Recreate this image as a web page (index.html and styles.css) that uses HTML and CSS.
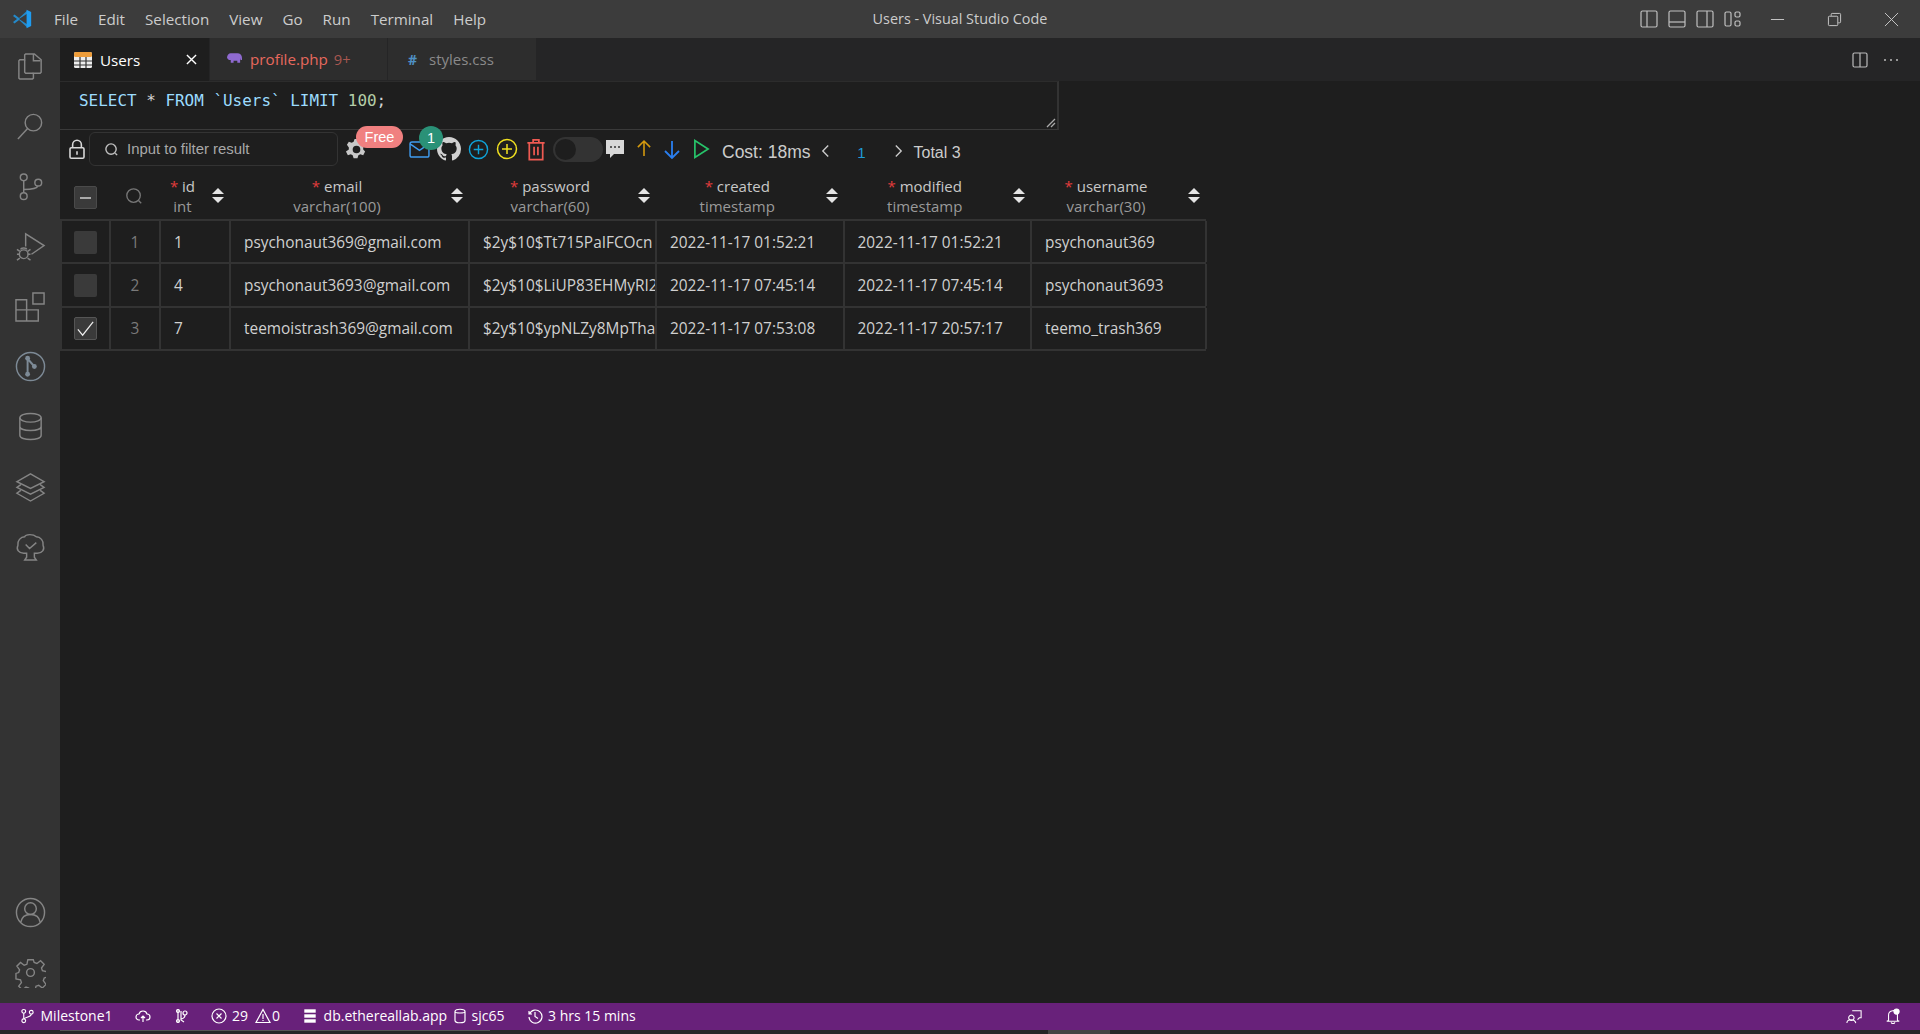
FILE: index.html
```html
<!DOCTYPE html>
<html lang="en">
<head>
<meta charset="utf-8">
<title>Users - Visual Studio Code</title>
<link rel="stylesheet" href="styles.css">
</head>
<body>
<div class="app">
  <header class="titlebar">
    <svg class="logo" viewBox="0 0 24 24"><path fill="#2489ca" d="M1.200 8.300 3 6.600l5.500 4.200L18 2l.1 3.700L8.400 12l9.700 6.300-.1 3.700-9.500-8.800L3 17.400l-1.800-1.700L6 12z"/><path fill="#1f9cf0" d="M17.500 1 23 3.700v16.600L17.500 23z"/></svg>
    <nav class="menu"><span>File</span><span>Edit</span><span>Selection</span><span>View</span><span>Go</span><span>Run</span><span>Terminal</span><span>Help</span></nav>
    <div class="wintitle">Users - Visual Studio Code</div>
    <div class="layout-icons">
      <svg viewBox="0 0 18 18"><rect x="1" y="1" width="16" height="16" rx="1.500"/><path d="M7 1v16"/></svg>
      <svg viewBox="0 0 18 18"><rect x="1" y="1" width="16" height="16" rx="1.500"/><path d="M1 12h16"/></svg>
      <svg viewBox="0 0 18 18"><rect x="1" y="1" width="16" height="16" rx="1.500"/><path d="M11 1v16"/></svg>
      <svg viewBox="0 0 18 18"><rect x="1" y="2" width="6" height="14" rx="1.500"/><rect x="11" y="2" width="5" height="5" rx="1.500"/><rect x="11" y="11" width="5" height="5" rx="1.500"/></svg>
    </div>
    <div class="winctl">
      <svg viewBox="0 0 16 16"><path d="M1 8h14"/></svg>
      <svg viewBox="0 0 16 16"><rect x="1.500" y="4.500" width="10" height="10" rx="1"/><path d="M4.500 4V2.500a1 1 0 0 1 1-1h8a1 1 0 0 1 1 1v8a1 1 0 0 1-1 1H12"/></svg>
      <svg viewBox="0 0 16 16"><path d="m1 1 14 14M15 1 1 15"/></svg>
    </div>
  </header>
  <div class="body">
    <aside class="activity">
      <svg viewBox="0 0 32 32"><path d="M19 3h-8l-1 1v5H5L4 10v18l1 1h13l1-1v-5h7l1-1V9l-7-6zM19 3v7h7"/><path d="M10 9v13l1 1h8"/></svg>
      <svg viewBox="0 0 32 32"><circle cx="19" cy="12" r="8.500"/><path d="M13 18 3 29"/></svg>
      <svg viewBox="0 0 32 32"><circle cx="9" cy="6.500" r="3.500"/><circle cx="9" cy="26" r="3.500"/><circle cx="24" cy="12" r="3.500"/><path d="M9 10v12.500M9 19c8 0 14-1 14.500-3.500"/></svg>
      <svg viewBox="0 0 32 32"><path d="M11 16V3l19 12-13 9"/><circle cx="9" cy="24" r="4.500"/><path d="M2 19l3 2M2 24h3M2 30l3-2M16 19l-3 2M16 24h-3M16 30l-3-2M6 19c0-2 6-2 6 0"/></svg>
      <svg viewBox="0 0 32 32"><path d="M1 9h11v10.500h12V31H1zM1 19.500h11V31M18.500 2H30v11.500H18.500z"/></svg>
      <svg class="git" viewBox="0 0 32 32"><circle cx="16" cy="16" r="14.500"/><path class="thick" d="M13 7v17M13 8l7 8"/><circle class="solid" cx="13" cy="7.500" r="2.500"/><circle class="solid" cx="13" cy="24" r="2.500"/><circle class="solid" cx="20" cy="16" r="2.500"/></svg>
      <svg viewBox="0 0 32 32"><ellipse cx="16" cy="7" rx="11" ry="4.500"/><path d="M5 7v18c0 6 22 6 22 0V7M5 16c0 5.500 22 5.500 22 0"/></svg>
      <svg viewBox="0 0 32 32"><path d="m16 3 14 8-14 7-14-7zM6 14l-4 3 14 7 14-7-4-3M6 20l-4 3 14 8 14-8-4-3"/></svg>
      <svg viewBox="0 0 32 32"><path d="M12 23H9C4 23 1 19 3 15 2 10 6 6 10 6c1-3 9-3 12 0 4 0 8 4 7 9 2 4-1 8-6 8h-3v4l2 3H10l2-3zM11 14l4 4 7-6"/></svg>
      <div class="spacer"></div>
      <svg viewBox="0 0 32 32"><circle cx="16" cy="16" r="14.500"/><circle cx="16" cy="12" r="6"/><path d="M6 26c1-6 5-8 10-8s9 2 10 8"/></svg>
      <svg viewBox="0 0 32 32"><path d="m13 2-1 5-3 1-4-3-4 4 3 4-1 3-3 1v6l5 1 1 3-3 4 4 4 4-3 3 1 1 3h6l1-5 3-1 4 3 4-4-3-4 1-3 3-1v-6l-5-1-1-3 3-4-4-4-4 3-3-1-1-3z" transform="translate(1 1) scale(.94)"/><circle cx="16" cy="16" r="4"/></svg>
    </aside>
    <main class="editor">
      <div class="tabs">
        <div class="tab active">
          <svg class="tabicon" viewBox="0 0 18 18"><rect y="1" width="18" height="16" rx="1.500" fill="#eee"/><rect y="1" width="18" height="5" rx="1.500" fill="#ee9d3a"/><path d="M0 10h18M0 14h18M6 6v11M12 6v11" stroke="#333" stroke-width="1.200"/></svg>
          <span class="tabname">Users</span>
          <svg class="tabclose" viewBox="0 0 12 12"><path d="m1 1 10 10M11 1 1 11"/></svg>
        </div>
        <div class="tab php">
          <svg class="tabicon" viewBox="0 0 16 12"><path fill="#8f6ad0" d="M4 1h7c3 0 5 2 5 5v2h-1.500l-.5-2v5h-3V9H7v2H4V8H2L0 6c0-3 2-5 4-5z"/></svg>
          <span class="tabname err">profile.php</span><span class="count">9+</span>
        </div>
        <div class="tab css">
          <span class="hash">#</span><span class="tabname dim">styles.css</span>
        </div>
        <div class="tabs-right">
          <svg viewBox="0 0 16 16"><rect x="1" y="1" width="14" height="14" rx="1.500"/><path d="M8 1v14"/></svg>
          <svg viewBox="0 0 16 16"><circle class="dot" cx="2" cy="8" r="1"/><circle class="dot" cx="8" cy="8" r="1"/><circle class="dot" cx="14" cy="8" r="1"/></svg>
        </div>
      </div>
      <div class="sqlbox">
        <code class="sql"><span class="kw">SELECT</span> <span class="star">*</span> <span class="kw">FROM</span> <span class="str">`Users`</span> <span class="kw">LIMIT</span> <span class="num">100</span><span class="star">;</span></code>
        <svg class="grip" viewBox="0 0 10 10"><path d="M9 1 1 9M9 5 5 9"/></svg>
      </div>
      <div class="toolbar">
        <svg class="lock" viewBox="0 0 20 24"><rect x="2" y="10" width="16" height="12" rx="1.500"/><path d="M5 10V6.500a5 5 0 0 1 10 0V10M10 14v4"/></svg>
        <div class="filter">
          <svg viewBox="0 0 16 16"><circle cx="7.500" cy="7.500" r="5.500"/><path d="m12 12 2 2"/></svg>
          <span>Input to filter result</span>
        </div>
        <div class="gear-wrap">
          <svg class="gear" viewBox="0 0 24 24"><path fill="#c8c8c8" d="m10 1-1 3-2 1-3-1-2 3 2 3v2l-3 2 2 4 3-1 2 1 1 3h4l1-3 2-1 3 1 2-4-2-2v-2l2-3-2-3-3 1-2-1-1-3zm2 7a4 4 0 1 1 0 8 4 4 0 0 1 0-8z"/></svg>
          <span class="free">Free</span>
        </div>
        <div class="mail-wrap">
          <svg class="mail" viewBox="0 0 22 18"><rect x="1" y="1" width="20" height="16" rx="2"/><path d="m1 3 10 7 10-7"/></svg>
          <span class="badge">1</span>
        </div>
        <svg class="github" viewBox="0 0 16 16"><path fill="#d0d0d0" d="M8 0C3.580 0 0 3.580 0 8c0 3.540 2.290 6.530 5.470 7.590.4.070.55-.17.55-.38 0-.19-.01-.82-.01-1.490-2.010.37-2.530-.49-2.690-.94-.09-.23-.48-.94-.82-1.130-.28-.15-.68-.52-.01-.53.63-.01 1.080.58 1.230.82.720 1.210 1.870.870 2.330.660.070-.520.280-.870.510-1.070-1.780-.2-3.640-.890-3.640-3.950 0-.870.310-1.590.820-2.150-.080-.2-.360-1.020.080-2.120 0 0 .670-.210 2.200.820a7.420 7.420 0 0 1 4 0c1.530-1.040 2.200-.820 2.200-.820.440 1.100.160 1.920.080 2.120.510.560.820 1.270.820 2.150 0 3.070-1.870 3.750-3.650 3.950.290.250.540.730.540 1.480 0 1.070-.010 1.930-.010 2.200 0 .210.150.460.550.380A8.010 8.010 0 0 0 16 8c0-4.420-3.580-8-8-8z"/></svg>
        <svg class="round blue" viewBox="0 0 22 22"><circle cx="11" cy="11" r="9.500"/><path d="M11 6v10M6 11h10"/></svg>
        <svg class="round yellow" viewBox="0 0 22 22"><circle cx="11" cy="11" r="9.500"/><path d="M11 6v10M6 11h10"/></svg>
        <svg class="trash" viewBox="0 0 20 24"><path d="M1 5h18M7 5V2h6v3M3 5v17.500h14V5M8 9v9M12 9v9"/></svg>
        <span class="toggle"><i></i></span>
        <svg class="chat" viewBox="0 0 20 20"><path fill="#d8d8d8" d="M1 1h18v14H9l-4 4v-4H1z"/><circle cx="6" cy="8" r="1" fill="#333"/><circle cx="10" cy="8" r="1" fill="#333"/><circle cx="14" cy="8" r="1" fill="#333"/></svg>
        <svg class="arrow up" viewBox="0 0 16 20"><path d="M8 19V2M1 9l7-7 7 7"/></svg>
        <svg class="arrow down" viewBox="0 0 16 20"><path d="M8 1v17M1 11l7 7 7-7"/></svg>
        <svg class="play" viewBox="0 0 18 22"><path d="M2 2v18l14-9z"/></svg>
        <span class="cost">Cost: 18ms</span>
        <svg class="chev first" viewBox="0 0 10 14"><path d="M8 1 2 7l6 6"/></svg>
        <span class="page">1</span>
        <svg class="chev" viewBox="0 0 10 14"><path d="m2 1 6 6-6 6"/></svg>
        <span class="total">Total 3</span>
      </div>
      <div class="grid">
        <div class="head">
          <div class="hc c-check"><span class="checkbox minus"></span></div>
          <div class="hc c-num"><svg class="hsearch" viewBox="0 0 20 20"><circle cx="9.500" cy="9.500" r="7.500"/><path d="m15 15 3 3"/></svg></div>
          <div class="hc c-id"><div class="hname"><p><b>*</b> id</p><p class="type">int</p></div><span class="sort"></span></div>
          <div class="hc c-email"><div class="hname"><p><b>*</b> email</p><p class="type">varchar(100)</p></div><span class="sort"></span></div>
          <div class="hc c-pw"><div class="hname"><p><b>*</b> password</p><p class="type">varchar(60)</p></div><span class="sort"></span></div>
          <div class="hc c-ts"><div class="hname"><p><b>*</b> created</p><p class="type">timestamp</p></div><span class="sort"></span></div>
          <div class="hc c-ts"><div class="hname"><p><b>*</b> modified</p><p class="type">timestamp</p></div><span class="sort"></span></div>
          <div class="hc c-user"><div class="hname"><p><b>*</b> username</p><p class="type">varchar(30)</p></div><span class="sort"></span></div>
        </div>
        <div class="row">
          <div class="c c-check"><span class="checkbox"></span></div><div class="c c-num">1</div><div class="c c-id">1</div><div class="c c-email">psychonaut369@gmail.com</div><div class="c c-pw">$2y$10$Tt715PaIFCOcn</div><div class="c c-ts">2022-11-17 01:52:21</div><div class="c c-ts">2022-11-17 01:52:21</div><div class="c c-user">psychonaut369</div>
        </div>
        <div class="row">
          <div class="c c-check"><span class="checkbox"></span></div><div class="c c-num">2</div><div class="c c-id">4</div><div class="c c-email">psychonaut3693@gmail.com</div><div class="c c-pw">$2y$10$LiUP83EHMyRI2</div><div class="c c-ts">2022-11-17 07:45:14</div><div class="c c-ts">2022-11-17 07:45:14</div><div class="c c-user">psychonaut3693</div>
        </div>
        <div class="row">
          <div class="c c-check"><span class="checkbox checked"><svg viewBox="0 0 22 22"><path d="m3 12 5 6L19 4"/></svg></span></div><div class="c c-num">3</div><div class="c c-id">7</div><div class="c c-email">teemoistrash369@gmail.com</div><div class="c c-pw">$2y$10$ypNLZy8MpTha</div><div class="c c-ts">2022-11-17 07:53:08</div><div class="c c-ts">2022-11-17 20:57:17</div><div class="c c-user">teemo_trash369</div>
        </div>
      </div>
    </main>
  </div>
  <footer class="status">
    <span class="si branch"><svg viewBox="0 0 16 16"><circle cx="4" cy="3" r="2"/><circle cx="4" cy="13" r="2"/><circle cx="12" cy="4" r="2"/><path d="M4 5v6M12 6c0 3-6 3-8 5"/></svg>Milestone1</span>
    <span class="si"><svg viewBox="0 0 16 16"><path d="M5 12H4a3 3 0 0 1 0-6c1-4 7-4 8 0a3 3 0 0 1 0 6h-1M8 14V8M6 10l2-2 2 2"/></svg></span>
    <span class="si"><svg viewBox="0 0 16 16"><circle cx="5" cy="3" r="1.500"/><circle cx="5" cy="13" r="1.500"/><circle cx="12" cy="5" r="2"/><path d="M5 1v14M8 3v9l3 2M12 7c0 3-3 4-4 4"/></svg></span>
    <span class="si"><svg viewBox="0 0 16 16"><circle cx="8" cy="8" r="7"/><path d="m5.500 5.500 5 5M10.500 5.500l-5 5"/></svg>29<svg class="tight" viewBox="0 0 16 16"><path d="M8 1.500 15 14.500H1zM8 6v5M8 12v1"/></svg>0</span>
    <span class="si db"><svg viewBox="0 0 16 16"><path class="fillw" d="M2 1h12v4H2zM2 6h12v4H2zM2 11h12v4H2z"/></svg>db.ethereallab.app</span>
    <span class="si"><svg class="cyl" viewBox="0 0 12 16"><path d="M1 3.500c0-3 10-3 10 0v9c0 3-10 3-10 0zM1 3.500c0 2 10 2 10 0"/></svg>sjc65</span>
    <span class="si"><svg viewBox="0 0 16 16"><path d="M2 3v3h3M2.500 6a6.500 6.500 0 1 1-.5 3M8 4v4.500l3 2"/></svg>3 hrs 15 mins</span>
    <span class="status-right">
      <svg viewBox="0 0 18 18"><path d="M7 3h10v8h-2l-2 2M6 8a3 3 0 1 0 .1 0zM1 17c0-5 9-5 10 0"/></svg>
      <svg viewBox="0 0 18 18"><path d="M4 14V8c0-6 9-7 10-1v7l2 1H2zM7 16c0 2 4 2 4 0"/><circle class="fillw" cx="13" cy="4" r="3.500"/></svg>
    </span>
  </footer>
  <div class="scrollstrip"><i class="strip-a"></i><i class="strip-b"></i></div>
</div>
</body>
</html>
```
FILE: styles.css
```css
* { box-sizing: border-box; }
html, body { margin: 0; height: 100%; background: #1e1e1e; overflow: hidden; }
body { font-family: "Open Sans", "Noto Sans", sans-serif; font-size: 14px; color: #ccc; }
p { margin: 0; }
svg { display: block; flex: none; fill: none; stroke: currentColor; stroke-width: 1.500; }
.app { width: 1920px; height: 1034px; display: flex; flex-direction: column; }

.titlebar { height: 38px; flex: none; background: #3c3c3c; display: flex; align-items: center; position: relative; }
.logo { width: 20px; height: 20px; margin-left: 12px; stroke: none; }
.menu { display: flex; margin-left: 12px; font-size: 15.200px; color: #ccc; }
.menu span { padding: 0 10px; }
.wintitle { position: absolute; left: 0; right: 0; top: 0; line-height: 37px; text-align: center; font-size: 14.400px; color: #ccc; }
.layout-icons { margin-left: auto; display: flex; gap: 10px; color: #c0c0c0; position: relative; }
.layout-icons svg { width: 18px; height: 18px; stroke-width: 1.200; }
.winctl { display: flex; align-items: center; gap: 42px; margin-left: 28px; margin-right: 21px; color: #ccc; }
.winctl svg { width: 15px; height: 15px; stroke-width: 1; }

.body { flex: 1; min-height: 0; display: flex; }
.activity { width: 60px; flex: none; background: #333; display: flex; flex-direction: column; align-items: center; padding: 13px 0 15px; color: #858585; gap: 29px; }
.activity svg { width: 31px; height: 31px; stroke-width: 1.500; }
.activity .git { color: #7d8a96; }
.activity .git .thick { stroke-width: 2; }
.activity .solid { fill: currentColor; stroke: none; }
.spacer { flex: 1; }

.editor { flex: 1; min-width: 0; background: #1e1e1e; display: flex; flex-direction: column; }
.tabs { height: 43px; flex: none; background: #252526; display: flex; align-items: stretch; }
.tab { display: flex; align-items: center; border-right: 1px solid #252526; background: #2d2d2d; border-bottom: 1px solid #252526; }
.tab.active { width: 150px; background: #1e1e1e; padding-left: 13px; border-bottom: 0; }
.tab.php { width: 178px; padding-left: 17px; }
.tab.css { width: 149px; padding-left: 20px; }
.tabicon { width: 20px; height: 18px; stroke: none; }
.php .tabicon { width: 15px; height: 12px; margin-top: -3px; }
.tabname { margin-left: 7px; font-size: 15.200px; color: #fff; }
.tabname.err { margin-left: 8px; color: #e8695e; }
.tabname.dim { margin-left: 11px; font-size: 15px; color: #8a8a8a; }
.count { margin-left: 6px; font-size: 14.700px; color: #a85750; }
.hash { width: 10px; color: #4f90c4; font-weight: 700; font-size: 14px; }
.tabclose { width: 11px; height: 11px; margin-left: auto; margin-right: 12px; color: #fff; }
.tabs-right { margin-left: auto; display: flex; align-items: center; gap: 15px; padding-right: 21px; color: #bbb; }
.tabs-right svg { width: 16px; height: 16px; stroke-width: 1.200; }
.tabs-right .dot { fill: #bbb; stroke: none; }

.sqlbox { width: 999px; height: 49px; flex: none; border-top: 1px solid #2c2c2c; border-bottom: 1px solid #3a3a3a; border-right: 2px solid #333; padding: 9px 0 0 19px; position: relative; background: #1e1e1e; }
.sql { font-family: "DejaVu Sans Mono", monospace; font-size: 15.950px; line-height: 20px; color: #d4d4d4; white-space: pre; }
.kw, .str { color: #9cdcfe; }
.num { color: #b5cea8; }
.star { color: #d4d4d4; }
.grip { position: absolute; right: 1px; bottom: 1px; width: 10px; height: 10px; color: #aaa; stroke-width: 1.300; }

.toolbar { height: 40px; flex: none; display: flex; align-items: center; padding: 0 0 2px 8px; }
.lock { width: 18px; height: 21px; color: #d8d8d8; stroke-width: 1.800; }
.filter { width: 249px; height: 34px; margin-left: 3px; border: 1px solid #333; border-radius: 6px; background: #1e1e1e; display: flex; align-items: center; gap: 8px; padding-left: 14px; color: #a8a8a8; font-family: "Liberation Sans", sans-serif; font-size: 14.900px; flex: none; }
.filter svg { width: 15px; height: 15px; color: #c0c0c0; }
.gear-wrap { width: 22px; height: 22px; margin-left: 7px; margin-right: 42px; position: relative; flex: none; }
.gear { width: 23px; height: 23px; stroke: none; }
.free { position: absolute; left: 11px; top: -12px; width: 47px; height: 22px; border-radius: 11px; background: #f08080; color: #fff; font-family: "Liberation Sans", sans-serif; font-size: 14.500px; line-height: 22px; text-align: center; }
.mail-wrap { width: 21px; height: 17px; position: relative; flex: none; }
.mail { width: 21px; height: 17px; color: #3f9cf0; }
.badge { position: absolute; left: 10px; top: -15px; width: 24px; height: 24px; border-radius: 50%; background: #2a9177; color: #fff; font-family: "Liberation Sans", sans-serif; font-size: 14.500px; line-height: 24px; text-align: center; }
.github { width: 24px; height: 24px; margin-left: 7px; stroke: none; }
.round { width: 21px; height: 21px; }
.round.blue { color: #0fa3d9; margin-left: 7px; }
.round.yellow { color: #f0e020; margin-left: 7px; width: 22px; height: 22px; }
.trash { width: 20px; height: 23px; color: #ee5a52; margin-left: 8px; stroke-width: 1.800; }
.toggle { width: 50px; height: 25px; border-radius: 13px; background: #333; margin-left: 7px; padding: 2px; display: block; flex: none; }
.toggle i { display: block; width: 21px; height: 21px; border-radius: 50%; background: #1e1e1e; }
.chat { width: 20px; height: 20px; margin-left: 2px; stroke: none; }
.arrow { height: 20px; stroke-width: 1.800; }
.arrow.up { width: 14px; color: #d59a0e; margin-left: 12px; margin-top: -3px; }
.arrow.down { width: 16px; color: #2a7ff0; margin-left: 13px; margin-top: 1px; }
.play { width: 17px; height: 22px; color: #27c46a; stroke-width: 1.800; margin-left: 13px; }
.cost { font-family: "Liberation Sans", sans-serif; font-size: 17.500px; color: #ccc; margin-left: 12px; margin-top: 7px; }
.chev { width: 9px; height: 14px; color: #ccc; stroke-width: 1.500; margin-top: 4px; }
.chev.first { margin-left: 10px; }
.page { color: #1f9cd8; font-family: "Liberation Sans", sans-serif; font-size: 15px; width: 64px; text-align: center; margin-top: 7px; }
.total { font-family: "Liberation Sans", sans-serif; font-size: 16px; color: #ccc; margin-left: 11px; margin-top: 7px; }

.grid { width: 1146px; }
.head { display: flex; height: 51px; border-bottom: 2px solid #333; font-size: 15px; }
.row { display: flex; height: 43.330px; border-bottom: 2px solid #333; font-size: 15.400px; }
.hc { display: flex; align-items: center; flex: none; padding-top: 2px; }
.c { display: flex; align-items: center; flex: none; padding: 1px 0 0 13px; border-right: 2px solid #333; color: #d0d0d0; overflow: hidden; white-space: nowrap; }
.c:first-child { border-left: 2px solid #333; }
.c-check { width: 51px; }
.c-num { width: 50px; }
.c-id { width: 70px; }
.c-email { width: 239px; }
.c-pw { width: 187px; }
.c-ts { width: 187.500px; }
.c-user { width: 175px; }
.hc.c-check, .c.c-check { justify-content: center; padding: 1px 0 0; }
.hc.c-check { padding-top: 5px; }
.hc.c-num { justify-content: center; padding: 2px 4px 0 0; }
.c.c-num { justify-content: center; padding: 1px 0 0; color: #7a7a7a; }
.hsearch { width: 18px; height: 18px; color: #777; }
.hname { flex: 1; text-align: center; line-height: 20px; color: #c8c8c8; padding-right: 8px; }
.hname b { color: #e03c3c; font-weight: 400; }
.type { color: #9a9a9a; }
.sort { width: 13px; height: 15px; margin: 0 6px 0 0; flex: none; position: relative; }
.sort::before, .sort::after { content: ""; position: absolute; left: 0; border-left: 6.500px solid transparent; border-right: 6.500px solid transparent; }
.sort::before { top: 0; border-bottom: 6.500px solid #e4e4e4; }
.sort::after { bottom: 0; border-top: 6.500px solid #e4e4e4; }
.checkbox { display: block; width: 23px; height: 23px; border-radius: 2px; background: #3a3a3a; position: relative; }
.checkbox.minus { border: 1px solid #4a4a4a; }
.checkbox.minus::after { content: ""; position: absolute; left: 5px; right: 5px; top: 10px; height: 2px; background: #aaa; }
.checkbox.checked { border: 1px solid #555; }
.checkbox.checked svg { width: 21px; height: 21px; color: #eee; stroke-width: 1.300; }

.status { height: 27px; flex: none; background: #68217a; color: #fff; display: flex; align-items: center; font-size: 14px; padding: 0 0 2px 20px; }
.si { display: flex; align-items: center; gap: 5.500px; margin-right: 22px; }
.si svg { width: 16px; height: 16px; stroke-width: 1.200; }
.si .tight { margin: 0 -4px 0 1px; }
.si.branch svg { width: 15px; }
.si.db { margin-right: 7px; }
.si .cyl { width: 12px; }
.fillw { fill: #fff; stroke: #68217a; stroke-width: .6; }
.status-right { margin-left: auto; display: flex; gap: 23px; padding-right: 19px; }
.status-right svg { width: 16px; height: 16px; stroke-width: 1.200; }
.status-right .fillw { stroke: none; }
.scrollstrip { height: 4px; flex: none; background: #252526; position: relative; }
.strip-a { position: absolute; left: 60px; top: 0; width: 430px; height: 1px; background: #555; }
.strip-b { position: absolute; left: 1048px; top: 0; width: 62px; height: 4px; background: #444; }
```
